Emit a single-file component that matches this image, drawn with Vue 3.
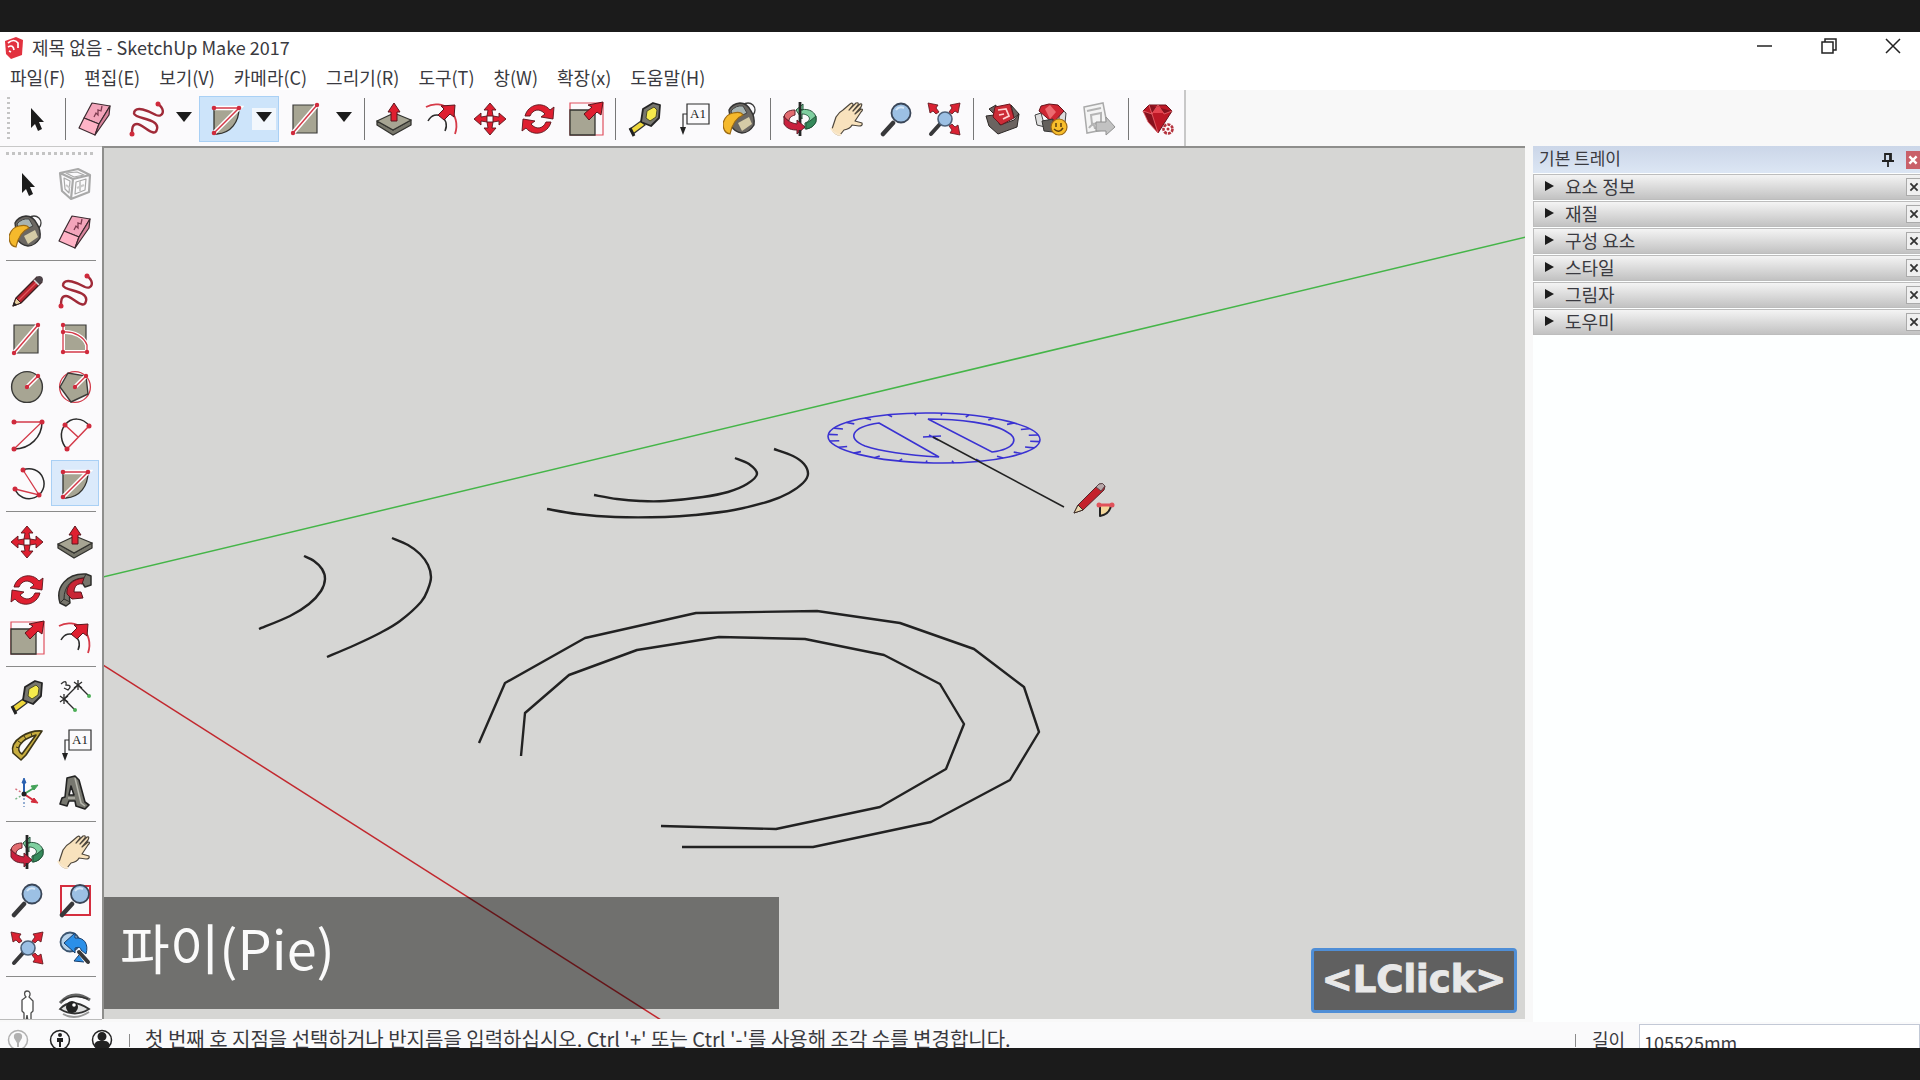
<template>
  <div class="screen">
    <svg class="sprite" aria-hidden="true">
      <symbol id="cursor" viewBox="0 0 36 36">
        <path d="M13 7V27L17 23L20 30L24 28L21 21H26Z" fill="#1c1c1c" />
      </symbol>
      <symbol id="eraser" viewBox="0 0 36 36">
        <g stroke="#3d2a30" stroke-width="1.2" stroke-linejoin="round">
          <path d="M15 2L33 5L22 23L7 17Z" fill="#f3a5bb" />
          <path d="M7 17L22 23L18 34L2 27Z" fill="#ffb3c6" />
          <path d="M22 23L33 5L32 14L18 34Z" fill="#d9849c" />
        </g>
        <path d="M17 16L19 12L21 14L21 9L24 10L25 5" fill="none" stroke="#7d3b50" stroke-width="1.3" />
      </symbol>
      <symbol id="freehand" viewBox="0 0 36 36">
        <path d="M30 3C38 9 35 17 28 14C21 10 7 4 6 12C5 18 32 17 29 28C27 38 15 23 9 23C4 23 4 28 4 33" fill="none" stroke="#a02a38" stroke-width="2.4" />
        <g fill="#cf2a3c"><circle cx="30" cy="3" r="2.5" /><circle cx="4" cy="33" r="2.5" /></g>
      </symbol>
      <symbol id="line" viewBox="0 0 36 36">
        <path d="M5 4H29V32H5Z" fill="#a7a593" stroke="#3a3a38" stroke-width="1.2" />
        <path d="M5 32L29 4" stroke="#fff" stroke-width="4.5" />
        <path d="M5 32L29 4" stroke="#d33a49" stroke-width="1.5" />
        <g fill="#cf2a3c"><circle cx="5" cy="32" r="2.2" /><circle cx="29" cy="4" r="2.2" /></g>
      </symbol>
      <symbol id="rotrect" viewBox="0 0 36 36">
        <path d="M6 4H29V31H6Z" fill="#a7a593" stroke="#3a3a38" stroke-width="1.2" />
        <path d="M6 4V31H30V24C27 16 17 10 6 11" fill="none" stroke="#fff" stroke-width="4" />
        <path d="M6 4V31H30V24C27 16 17 10 6 11" fill="none" stroke="#d33a49" stroke-width="1.3" />
        <g fill="#cf2a3c"><circle cx="6" cy="4" r="2.2" /><circle cx="6" cy="11" r="2.2" /><circle cx="6" cy="31" r="2.2" /><circle cx="30" cy="31" r="2.2" /></g>
      </symbol>
      <symbol id="circle" viewBox="0 0 36 36">
        <circle cx="18" cy="18" r="15.4" fill="#a7a593" stroke="#3a3a38" stroke-width="1.4" />
        <path d="M18 18L29 7" stroke="#fff" stroke-width="4.5" />
        <path d="M18 18L29 7" stroke="#d33a49" stroke-width="1.5" />
        <g fill="#cf2a3c"><circle cx="18" cy="18" r="2.2" /><circle cx="29" cy="7" r="2.2" /></g>
      </symbol>
      <symbol id="polygon" viewBox="0 0 36 36">
        <circle cx="18" cy="18" r="15.4" fill="none" stroke="#d33a49" stroke-width="1.3" />
        <path d="M3 18L11 4L29 7L31 25L14 33Z" fill="#a7a593" stroke="#3a3a38" stroke-width="1.4" />
        <path d="M18 18L29 7" stroke="#fff" stroke-width="4.5" />
        <path d="M18 18L29 7" stroke="#d33a49" stroke-width="1.5" />
        <g fill="#cf2a3c"><circle cx="18" cy="18" r="2.2" /><circle cx="29" cy="7" r="2.2" /></g>
      </symbol>
      <symbol id="arc" viewBox="0 0 36 36">
        <path d="M33 5C33 20 21 32 5 32" fill="none" stroke="#2b2b2b" stroke-width="1.5" />
        <path d="M5 5H33L5 32" fill="none" stroke="#d33a49" stroke-width="1.3" />
        <g fill="#cf2a3c"><circle cx="5" cy="5" r="2.5" /><circle cx="33" cy="5" r="2.5" /><circle cx="5" cy="32" r="2.5" /></g>
      </symbol>
      <symbol id="arc2" viewBox="0 0 36 36">
        <path d="M32 9C26 0 14 0 8 8C2 15 4 26 10 32" fill="none" stroke="#2b2b2b" stroke-width="1.5" />
        <path d="M32 9L10 32M8 8L21 20" fill="none" stroke="#d33a49" stroke-width="1.5" />
        <g fill="#cf2a3c"><circle cx="8" cy="8" r="2.5" /><circle cx="32" cy="9" r="2.5" /><circle cx="10" cy="32" r="2.5" /></g>
      </symbol>
      <symbol id="arc3" viewBox="0 0 36 36">
        <path d="M14 5A15 15 0 1 1 6 24" fill="none" stroke="#2b2b2b" stroke-width="1.5" />
        <path d="M14 5L30 30L6 24" fill="none" stroke="#d33a49" stroke-width="1.3" />
        <g fill="#cf2a3c"><circle cx="14" cy="5" r="2.5" /><circle cx="30" cy="30" r="2.5" /><circle cx="6" cy="24" r="2.5" /></g>
      </symbol>
      <symbol id="pie" viewBox="0 0 36 36">
        <path d="M6 7H31C31 21 23 32 9 33H6Z" fill="#a7a593" stroke="#33332f" stroke-width="1.3" />
        <path d="M6 7H31L6 32" fill="none" stroke="#fff" stroke-width="4.5" />
        <path d="M6 7H31L6 32" fill="none" stroke="#d33a49" stroke-width="1.5" />
        <g fill="#cf2a3c"><circle cx="6" cy="7" r="2.3" /><circle cx="31" cy="7" r="2.3" /><circle cx="6" cy="32" r="2.3" /></g>
      </symbol>
      <symbol id="pencil" viewBox="0 0 36 36">
        <path d="M4 33L7 25L28 4L33 9L12 30Z" fill="#b8232e" stroke="#3a2022" stroke-width="1.3" stroke-linejoin="round" />
        <path d="M10 27L29 8" stroke="#e0565c" stroke-width="1.2" />
        <path d="M4 33L7 25L12 30Z" fill="#e8d0a0" stroke="#3a2022" />
        <path d="M4 33L5 29L8 32Z" fill="#222" />
        <path d="M25 7L28 4Q30 2 33 4Q35 7 33 9L30 12Z" fill="#4d4348" />
        <path d="M25 7L30 12" stroke="#d8d8d8" stroke-width="1.5" />
      </symbol>
      <symbol id="paint" viewBox="0 0 36 36">
        <circle cx="25" cy="9" r="7" fill="none" stroke="#3c3c3c" stroke-width="1.3" />
        <path d="M6 9Q9 3 17 2Q24 2 28 10Q32 16 31 24Q26 32 19 32Q11 31 8 24Z" fill="#6b6762" stroke="#333" stroke-width="1.4" stroke-linejoin="round" />
        <path d="M8 10Q13 4 20 5L24 12Q16 15 12 19Z" fill="#a8b4b2" stroke="#444" />
        <path d="M15 22L26 16L29 23L19 30Z" fill="#d5cba6" />
        <path d="M0 22Q3 13 10 12Q18 10 20 14Q10 18 7 33Q0 32 0 22Z" fill="#f5b92c" stroke="#9d6b14" stroke-width="1.2" />
      </symbol>
      <symbol id="component" viewBox="0 0 36 36">
        <g fill="none" stroke="#a9a9a9" stroke-width="2.2" stroke-linejoin="round">
          <path d="M3 7L21 3L33 9L32 26L14 33L5 25ZM3 7L16 13L33 9M16 13L14 33" />
          <path d="M7 12L13 15L12 27L8 23ZM19 16L29 13L28 24L18 28ZM9 7L20 6L27 9L17 11Z" stroke-width="1.2" />
        </g>
        <path d="M9 19L13 22M20 22L27 19M23 15V25" stroke="#c9c9c9" stroke-width="2" />
      </symbol>
      <symbol id="move" viewBox="0 0 36 36">
        <g fill="#df1f30" stroke="#5b151c" stroke-width=".9">
          <path v-for="a in [0, 90, 180, 270]" :key="a" d="M18 2L24 9H20L21 15H15L16 9H12Z" :transform="`rotate(${a} 18 18)`" />
        </g>
      </symbol>
      <symbol id="pushpull" viewBox="0 0 36 36">
        <g stroke="#33332f" stroke-width="1.3" stroke-linejoin="round">
          <path d="M1 20V24L17 34L35 24V19L17 29Z" fill="#77766a" />
          <path d="M1 20L18 12L35 19L17 29Z" fill="#a7a593" />
        </g>
        <path d="M18 2L24 11H21V20H15V11H12Z" fill="#df1f30" stroke="#5b151c" />
      </symbol>
      <symbol id="rotate" viewBox="0 0 36 36">
        <g fill="#df1f30" stroke="#5b151c" stroke-width=".9" stroke-linejoin="round">
          <path d="M5 15C8 3 23 0 30 9L34 6L33 18L21 16L25 13C20 7 13 8 10 15Z" />
          <path d="M5 15C8 3 23 0 30 9L34 6L33 18L21 16L25 13C20 7 13 8 10 15Z" transform="rotate(180 18 18)" />
        </g>
      </symbol>
      <symbol id="followme" viewBox="0 0 36 36">
        <path d="M3 31C-2 15 10 1 29 2L34 4V13L28 15L24 9C16 10 11 17 13 31L9 34Z" fill="#77756c" stroke="#2e2e2b" stroke-width="1.5" stroke-linejoin="round" />
        <path d="M3 31L7 27L13 30M7 27C7 14 15 6 27 6M27 6L29 2" fill="none" stroke="#2e2e2b" />
        <path d="M27 6C15 7 9 14 10 22L15 27L26 26L24 20L17 20C17 14 21 11 25 12Z" fill="#c82535" stroke="#5b151c" />
      </symbol>
      <symbol id="scale" viewBox="0 0 36 36">
        <path d="M2 2H35V34H2Z" fill="none" stroke="#e0515f" stroke-width="1.2" />
        <path d="M2 9H27V34H2Z" fill="#a7a593" stroke="#33332f" stroke-width="1.3" />
        <path d="M35 1L33 14L29 11L21 19L16 13L24 6L20 4Z" fill="#df1f30" stroke="#5b151c" />
      </symbol>
      <symbol id="offset" viewBox="0 0 36 36">
        <path d="M2 6C18-3 38 12 31 33" fill="none" stroke="#d63a48" stroke-width="1.8" />
        <path d="M4 20C11 7 27 17 21 30" fill="none" stroke="#2b2b2b" stroke-width="1.5" />
        <path d="M31 4L30 16L26 13L20 19L14 14L20 8L17 5Z" fill="#df1f30" stroke="#5b151c" />
      </symbol>
      <symbol id="tape" viewBox="0 0 36 36">
        <path d="M3 28L14 20L18 24L6 33Z" fill="#efd83c" stroke="#333" stroke-width="1.3" />
        <path d="M3 27L7 35" stroke="#222" stroke-width="3" />
        <path d="M16 8L26 2L33 4L32 17L24 25L14 21Z" fill="#77766f" stroke="#242424" stroke-width="1.8" stroke-linejoin="round" />
        <path d="M20 10L27 6L30 9L29 16L23 20L19 17Z" fill="#f6ea4c" stroke="#4e4e28" />
      </symbol>
      <symbol id="dimension" viewBox="0 0 36 36">
        <path d="M7 20L21 6M7 20L17 30M21 6L31 16" stroke="#2b2b2b" stroke-width="1.4" />
        <path d="M3 17L11 23M3 23L11 17M7 15V25M17 3L25 9M17 9L25 3M21 1V11" stroke="#2b2b2b" stroke-width="1.3" />
        <g fill="#4bad55"><circle cx="18" cy="31" r="2" /><circle cx="32" cy="17" r="2" /></g>
        <path d="M4 5Q10 0 9 6Q16 6 11 11L7 9" fill="none" stroke="#333" stroke-width="1.3" />
      </symbol>
      <symbol id="protractor" viewBox="0 0 36 36">
        <path fill-rule="evenodd" d="M33 4C20 3 0 13 4 26L12 33L17 28ZM27 8L13 27C6 23 10 13 27 8Z" fill="#c7ad3f" stroke="#3c3517" stroke-width="1.6" stroke-linejoin="round" />
        <path d="M7 20L10 21M9 14L12 16M15 9L17 12M22 6L23 9" stroke="#3c3517" />
      </symbol>
      <symbol id="textlabel" viewBox="0 0 36 36">
        <path d="M12 3H34V23H12ZM12 13H8V27" fill="none" stroke="#2d2d2d" stroke-width="1.2" />
        <path d="M5 26H11L8 34Z" fill="#222" />
        <text x="23" y="17" text-anchor="middle" font-family="Liberation Serif, serif" font-size="13" fill="#222">A1</text>
      </symbol>
      <symbol id="axes" viewBox="0 0 36 36">
        <path d="M15 19V8" stroke="#285fb0" stroke-width="2" />
        <path d="M15 3L17 8H13Z" fill="#285fb0" stroke="#285fb0" />
        <path d="M15 19L25 13" stroke="#44a259" stroke-width="2" />
        <path d="M29 10L25 15L22 11Z" fill="#44a259" stroke="#44a259" />
        <path d="M15 19L24 25" stroke="#d42b3b" stroke-width="2" />
        <path d="M29 28L22 27L25 23Z" fill="#d42b3b" stroke="#d42b3b" />
        <g stroke-width="1.5" stroke-dasharray="2 2"><path d="M15 19V32" stroke="#7394c4" /><path d="M15 19L5 25" stroke="#79b788" /><path d="M15 19L5 13" stroke="#d7707b" /></g>
        <circle cx="15" cy="19" r="2.5" fill="#222" />
      </symbol>
      <symbol id="text3d" viewBox="0 0 36 36">
        <path fill-rule="evenodd" d="M10 3L18 1L22 5L28 27L32 30L28 34L19 31L18 26H12L10 31L3 29L5 23L8 22ZM14 11L12 20H17Z" fill="#77776f" stroke="#232323" stroke-width="1.6" stroke-linejoin="round" />
        <path d="M18 3L24 28L28 31M11 23H18" stroke="#b8b8af" stroke-width="1.5" fill="none" />
      </symbol>
      <symbol id="orbit" viewBox="0 0 36 36">
        <path d="M18 9C30 6 37 15 33 22C31 26 27 28 23 28V22C31 19 27 13 20 13V18L14 9L21 3V9Z" fill="#7fd0a0" stroke="#24543a" />
        <path d="M28 20L34 15V21Q31 27 24 28V22Z" fill="#35895b" stroke="#24543a" />
        <path d="M13 9C6 9 2 12 2 17L7 20C7 17 9 15 13 14Z" fill="#e26c70" stroke="#60202a" />
        <path d="M18 1V24" stroke="#262626" stroke-width="2.8" />
        <path d="M2 15V23C5 28 10 29 15 29V33L23 26L15 19V23C9 22 5 20 2 15Z" fill="#c9203d" stroke="#60202a" />
        <path d="M18 29V35" stroke="#262626" stroke-width="2.8" />
      </symbol>
      <symbol id="hand" viewBox="0 0 36 36">
        <path d="M2 28L6 16Q9 11 13 9L20 3Q23 1 23 4L19 9L26 2Q29 1 28 4L23 10L30 3Q33 2 31 6L25 13L31 8Q34 8 31 11L25 20L32 22Q33 25 29 25L22 24Q20 28 14 29L10 34Q5 34 2 28Z" fill="#f8e2bd" stroke="#4d463c" stroke-width="1.2" stroke-linejoin="round" />
        <path d="M1 27Q5 34 11 34" fill="none" stroke="#fae8cb" stroke-width="2" />
      </symbol>
      <symbol id="zoom" viewBox="0 0 36 36">
        <path d="M5 33L15 22" stroke="#38383a" stroke-width="4.5" stroke-linecap="round" />
        <circle cx="23" cy="12" r="9.5" fill="#9cc0e4" stroke="#3a4658" stroke-width="1.8" />
        <path d="M18 9Q21 5 26 7" fill="none" stroke="#d5e6f6" stroke-width="2" />
      </symbol>
      <symbol id="zoomwin" viewBox="0 0 36 36">
        <path d="M4 4H33V33H4Z" fill="none" stroke="#d52e3f" stroke-width="2" />
        <path d="M5 33L15 22" stroke="#38383a" stroke-width="4.5" stroke-linecap="round" />
        <circle cx="23" cy="12" r="9" fill="#9cc0e4" stroke="#3a4658" stroke-width="1.8" />
        <path d="M18 9Q21 5 26 7" fill="none" stroke="#d5e6f6" stroke-width="2" />
      </symbol>
      <symbol id="zoomext" viewBox="0 0 36 36">
        <path d="M5 33L14 23" stroke="#38383a" stroke-width="4" stroke-linecap="round" />
        <circle cx="19" cy="18" r="7" fill="#9cc0e4" stroke="#4c6078" stroke-width="1.6" />
        <path d="M2 2L12 4L10 7L13 11L10 13L7 10L4 12ZM34 2L24 4L26 7L23 11L26 13L29 10L32 12ZM34 34L24 32L26 29L23 25L26 23L29 26L32 24Z" fill="#d92233" stroke="#5b151c" stroke-width=".8" />
      </symbol>
      <symbol id="zoomprev" viewBox="0 0 36 36">
        <circle cx="13" cy="12" r="9.5" fill="#b7d2ea" stroke="#3c5570" stroke-width="1.8" />
        <path d="M7 13L18 3V8C27 7 32 14 29 24L24 20C24 17 21 17 18 18V23ZM22 25L17 31L27 32" fill="#2b8fe8" stroke="#173d6b" />
        <path d="M22 22L31 32" stroke="#38383a" stroke-width="4" stroke-linecap="round" />
      </symbol>
      <symbol id="walk" viewBox="0 0 36 36">
        <path d="M18 2C15 2 15 6 17 8L13 11V22L15 24V32H17L18 26L19 32H22V24L24 22V12L20 8C22 5 21 2 18 2Z" fill="#fff" stroke="#4b4b4b" stroke-width="1.3" />
        <path d="M13 32H17M19 32H23" stroke="#a33" stroke-width="1.5" />
      </symbol>
      <symbol id="eye" viewBox="0 0 36 36">
        <path d="M3 14Q16 0 33 11" fill="none" stroke="#666" stroke-width="3" />
        <path d="M5 12Q17 4 31 10" fill="none" stroke="#333" stroke-width="1.5" />
        <path d="M3 20Q14 8 32 20Q18 29 3 20Z" fill="#e0e0e0" stroke="#333" stroke-width="1.8" />
        <circle cx="15" cy="18" r="6" fill="#222" /><circle cx="17" cy="16" r="1.8" fill="#fff" />
        <path d="M6 25Q18 32 32 23" fill="none" stroke="#999" stroke-width="2" />
      </symbol>
      <symbol id="warehouse" viewBox="0 0 36 36">
        <path d="M1 15L9 14L15 24L29 19L34 13L32 26L13 33L4 25ZM4 8L11 4L10 14ZM26 4L34 13L29 17Z" fill="#6b6360" stroke="#2c2826" stroke-linejoin="round" />
        <path d="M10 6L25 3L29 17L16 24L8 16Z" fill="#cc2b36" stroke="#6d151d" />
        <path d="M13 9L21 8L24 15L18 18M14 14L19 13" fill="none" stroke="#ffd2d2" stroke-width="1.7" />
      </symbol>
      <symbol id="extension" viewBox="0 0 36 36">
        <path d="M2 14L8 12L12 26L4 24ZM26 6L33 12L32 22L26 20Z" fill="#dedede" stroke="#444" />
        <path d="M8 5L16 3L25 4L31 10L20 22L6 10Z" fill="#cf2632" stroke="#64131b" />
        <path d="M12 8L17 4L23 11L17 18Z" fill="#ec6a70" />
        <path d="M9 20L20 18V31L11 30Z" fill="#63605d" stroke="#333" />
        <circle cx="26" cy="26" r="8" fill="#f8be2b" stroke="#9b6815" stroke-width="1.2" />
        <path d="M23 22V26M28 22V26M21 28Q26 33 30 27" fill="none" stroke="#5d400e" stroke-width="1.5" />
      </symbol>
      <symbol id="layout" viewBox="0 0 36 36">
        <path d="M3 6L22 2L27 28L6 32Z" fill="#f4f4f4" stroke="#aaa" stroke-width="1.5" />
        <path d="M6 10L20 7M10 14L20 12V22L11 23ZM8 27Q13 20 14 28" fill="none" stroke="#b4b4b4" stroke-width="2" />
        <path d="M15 21H25V16L34 26L25 34V30H15Z" fill="#c2c2c2" stroke="#909090" />
      </symbol>
      <symbol id="ruby" viewBox="0 0 36 36">
        <path d="M3 10L9 4H26L32 10L18 32Z" fill="#bd1826" stroke="#68101a" stroke-linejoin="round" />
        <path d="M3 10L12 13L18 32L8 21ZM9 4L12 13L18 4L24 13L32 10" fill="#86121e" stroke="#ec6970" stroke-width=".8" />
        <path d="M12 12L18 5L24 12Z" fill="#e5444f" />
        <circle cx="28" cy="28" r="4.5" fill="#fff" stroke="#b5343f" stroke-width="2.6" stroke-dasharray="3 1" />
        <circle cx="28" cy="28" r="1.5" fill="#b5343f" />
      </symbol>
    </svg>

    <div class="letterbox"></div>

    <header class="titlebar">
      <svg class="logo" viewBox="0 0 20 24">
        <path d="M1 5L12 1L19 4L18 19L7 23L2 18Z" fill="#e2323f" />
        <path d="M4 7Q10 2 14 7V12M4 11Q9 8 10 14M5 15L7 16" fill="none" stroke="#fff" stroke-width="1.7" />
      </svg>
      <h1>제목 없음 - SketchUp Make 2017</h1>
      <div class="window-buttons">
        <button aria-label="최소화"><svg viewBox="0 0 18 18"><path d="M1 9H16" /></svg></button>
        <button aria-label="이전 크기로"><svg viewBox="0 0 18 18"><path d="M2 5H13V16H2ZM5 5V2H16V13H13" /></svg></button>
        <button aria-label="닫기"><svg viewBox="0 0 18 18"><path d="M2 2L16 16M16 2L2 16" /></svg></button>
      </div>
    </header>

    <nav class="menubar">
      <button v-for="item in menus" :key="item">{{ item }}</button>
    </nav>

    <div class="toolbar-row">
      <div class="toolbar">
        <template v-for="(group, g) in toolbar" :key="g">
          <span v-if="g" class="divider"></span>
          <template v-for="tool in group" :key="tool.icon">
            <div v-if="tool.menu" class="split" :class="{ active: tool.active }">
              <button class="split-main" :aria-label="tool.icon"><svg class="icon"><use :href="'#' + tool.icon" /></svg></button>
              <button class="split-arrow" :aria-label="tool.icon + ' menu'"><svg viewBox="0 0 16 10"><path d="M0 0H16L8 10Z" /></svg></button>
            </div>
            <button v-else class="tool" :aria-label="tool.icon"><svg class="icon"><use :href="'#' + tool.icon" /></svg></button>
          </template>
        </template>
      </div>
    </div>

    <main class="workspace">
      <aside class="toolset">
        <div class="grip"></div>
        <div v-for="(group, g) in toolset" :key="g" class="tool-group">
          <button v-for="name in group" :key="name" class="tool" :class="{ active: name === 'pie' }" :aria-label="name">
            <svg class="icon"><use :href="'#' + name" /></svg>
          </button>
        </div>
      </aside>

      <section class="viewport">
        <svg class="model" viewBox="104 148 1421 871" preserveAspectRatio="xMinYMin slice">
          <path d="M103 577L1526 237" stroke="#45b548" stroke-width="1.5" />
          <path d="M103 665L661 1020" stroke="#c2282e" stroke-width="1.5" />
          <g fill="none" stroke="#222" stroke-width="2.4" stroke-linejoin="round">
            <path v-for="(arc, i) in arcs" :key="i" :d="smooth(arc)" />
            <polyline v-for="points in coarseArcs" :key="points" :points="points" />
          </g>
          <g fill="none" stroke="#3a32d2" stroke-width="1.6">
            <ellipse cx="934" cy="438" rx="106" ry="25" transform="rotate(1 934 438)" />
            <path v-for="(d, i) in ticks" :key="i" :d="d" transform="rotate(1 934 438)" />
            <path d="M879 423L939 457C905 455 880 451 865 446C847 439 850 427 879 423Z" />
            <path d="M928 419L992 452C1016 449 1019 438 1007 432C994 423 958 419 928 419Z" />
            <path d="M923 437L941 436M929 435L938 440" />
          </g>
          <path d="M933 437L1064 507" stroke="#222" stroke-width="1.5" />
          <g stroke-linejoin="round">
            <path d="M1074 513L1078 505L1098 485Q1102 482 1105 486L1104 490L1083 510Z" fill="#c4222c" stroke="#54272a" />
            <path d="M1074 513L1078 505L1083 510Z" fill="#ead7ae" stroke="#3a3028" />
            <path d="M1096 487L1099 484Q1103 482 1105 486L1101 491Z" fill="#b9a8aa" stroke="#5a4548" />
            <path d="M1100 505H1111Q1110 514 1100 516Z" fill="#f3d79b" stroke="#222" stroke-width="2" />
            <path d="M1099 505H1112" stroke="#e0525a" stroke-width="3" />
            <g fill="#e0525a"><circle cx="1099" cy="505" r="2.5" /><circle cx="1112" cy="505" r="2.5" /></g>
          </g>
        </svg>
        <div class="caption">파이(Pie)</div>
        <div class="keypress">&lt;LClick&gt;</div>
      </section>

      <aside class="tray">
        <div class="tray-header">
          <h2>기본 트레이</h2>
          <button class="pin" aria-label="고정"><svg viewBox="0 0 12 14"><path d="M3 1H9V8H3ZM8 1V8M0 8H12M6 8V14" fill="none" stroke="#222" stroke-width="1.8" /></svg></button>
          <button class="tray-close" aria-label="닫기"><svg viewBox="0 0 10 10"><path d="M2 2L8 8M8 2L2 8" /></svg></button>
        </div>
        <div v-for="panel in panels" :key="panel" class="panel">
          <button class="panel-title"><svg viewBox="0 0 9 10"><path d="M0 0L9 5L0 10Z" /></svg>{{ panel }}</button>
          <button class="panel-close" :aria-label="panel + ' 닫기'"><svg viewBox="0 0 10 10"><path d="M2 2L8 8M8 2L2 8" /></svg></button>
        </div>
      </aside>
    </main>

    <footer class="statusbar">
      <div class="status-icons">
        <svg viewBox="0 0 22 22" class="dim"><circle cx="11" cy="11" r="9.5" /><path d="M11 4Q16 4 15 9L12 14V18H10V14L7 9Q6 4 11 4Z" /></svg>
        <svg viewBox="0 0 22 22"><circle cx="11" cy="11" r="9.5" /><path d="M11 4A2 2 0 0 1 11 8A2 2 0 0 1 11 4ZM8 9H14V13H12V18H10V13H8Z" /></svg>
        <svg viewBox="0 0 22 22"><circle cx="11" cy="11" r="9.5" /><path d="M11 3A4 4 0 0 1 11 12A4 4 0 0 1 11 3ZM3 17Q4 12 8 12H14Q18 12 19 17Q11 24 3 17Z" /></svg>
      </div>
      <span class="status-divider"></span>
      <p>첫 번째 호 지점을 선택하거나 반지름을 입력하십시오. Ctrl '+' 또는 Ctrl '-'를 사용해 조각 수를 변경합니다.</p>
      <span class="status-divider"></span>
      <label for="length">길이</label>
      <input id="length" v-model="length" type="text" />
    </footer>

    <div class="letterbox"></div>
  </div>
</template>

<script setup>
import { ref } from 'vue'

const length = ref('105525mm')

const menus = ['파일(F)', '편집(E)', '보기(V)', '카메라(C)', '그리기(R)', '도구(T)', '창(W)', '확장(x)', '도움말(H)']

const panels = ['요소 정보', '재질', '구성 요소', '스타일', '그림자', '도우미']

const toolbar = [
  [{ icon: 'cursor' }],
  [
    { icon: 'eraser' },
    { icon: 'freehand', menu: true },
    { icon: 'pie', menu: true, active: true },
    { icon: 'line', menu: true }
  ],
  [{ icon: 'pushpull' }, { icon: 'offset' }, { icon: 'move' }, { icon: 'rotate' }, { icon: 'scale' }],
  [{ icon: 'tape' }, { icon: 'textlabel' }, { icon: 'paint' }],
  [{ icon: 'orbit' }, { icon: 'hand' }, { icon: 'zoom' }, { icon: 'zoomext' }],
  [{ icon: 'warehouse' }, { icon: 'extension' }, { icon: 'layout' }],
  [{ icon: 'ruby' }]
]

const toolset = [
  ['cursor', 'component', 'paint', 'eraser'],
  ['pencil', 'freehand', 'line', 'rotrect', 'circle', 'polygon', 'arc', 'arc2', 'arc3', 'pie'],
  ['move', 'pushpull', 'rotate', 'followme', 'scale', 'offset'],
  ['tape', 'dimension', 'protractor', 'textlabel', 'axes', 'text3d'],
  ['orbit', 'hand', 'zoom', 'zoomwin', 'zoomext', 'zoomprev'],
  ['walk', 'eye']
]

// arcs already drawn in the model
const arcs = [
  [[304, 556], [314, 561], [322, 569], [325, 579], [321, 591], [309, 604], [290, 616], [259, 629]],
  [[392, 538], [408, 545], [420, 554], [428, 565], [431, 577], [428, 589], [421, 602], [400, 621], [380, 633], [355, 645], [327, 657]],
  [[735, 458], [749, 464], [757, 474], [747, 484], [728, 492], [703, 497], [665, 501], [640, 501], [617, 499], [594, 495]],
  [[774, 449], [793, 456], [804, 464], [808, 474], [803, 483], [789, 493], [770, 501], [734, 510], [695, 515], [665, 517], [615, 517], [577, 514], [547, 509]]
]

// arcs with a low segment count keep their corners
const coarseArcs = [
  '479,743 505,683 585,638 696,613 817,611 900,623 974,649 1024,687 1039,732 1010,780 931,822 813,847 682,847',
  '521,756 525,713 569,675 637,650 719,637 805,639 884,655 940,684 964,724 946,769 880,807 776,829 661,826'
]

function smooth(pts) {
  let d = `M${pts[0].join(' ')}`
  for (let i = 0; i < pts.length - 1; i++) {
    const p0 = pts[i - 1] || pts[i]
    const p1 = pts[i]
    const p2 = pts[i + 1]
    const p3 = pts[i + 2] || p2
    d += `C${p1[0] + (p2[0] - p0[0]) / 6} ${p1[1] + (p2[1] - p0[1]) / 6} `
    d += `${p2[0] - (p3[0] - p1[0]) / 6} ${p2[1] - (p3[1] - p1[1]) / 6} ${p2[0]} ${p2[1]}`
  }
  return d
}

// protractor marks every 15 degrees
const ticks = Array.from({ length: 24 }, (_, i) => {
  const a = ((i * 15 + 4) * Math.PI) / 180
  const at = (k) => `${934 + 106 * k * Math.cos(a)} ${438 + 25 * k * Math.sin(a)}`
  return `M${at(1)}L${at(0.91)}`
})
</script>

<style>
body {
  margin: 0;
  background: #1b1b1b;
}
</style>

<style scoped>
.screen {
  display: flex;
  flex-direction: column;
  height: 100vh;
  overflow: hidden;
  background: #f8f8f8;
  color: #3a3a40;
  font-family: "Noto Sans CJK KR", sans-serif;
}

.screen * {
  box-sizing: border-box;
}

.sprite {
  display: none;
}

button {
  display: flex;
  align-items: center;
  justify-content: center;
  padding: 0;
  border: 0;
  background: none;
  color: inherit;
  font: inherit;
}

.letterbox {
  flex: 0 0 32px;
  background: #1b1b1b;
}

.titlebar {
  display: flex;
  flex: 0 0 32px;
  align-items: center;
  background: #fff;
}

.logo {
  width: 20px;
  height: 24px;
  margin: 0 8px 0 4px;
}

h1 {
  flex: 1;
  margin: 0;
  padding-bottom: 2px;
  font-size: 18px;
  font-weight: 400;
  line-height: 24px;
}

.window-buttons {
  display: flex;
  gap: 10px;
  padding-bottom: 4px;
}

.window-buttons button {
  width: 54px;
  height: 28px;
}

.window-buttons svg {
  width: 18px;
  height: 18px;
  fill: none;
  stroke: #222;
  stroke-width: 1.5;
}

.menubar {
  display: flex;
  flex: 0 0 26px;
  gap: 19px;
  padding-left: 10px;
  background: #fff;
  font-size: 18px;
  line-height: 24px;
}

.toolbar-row {
  display: flex;
  flex: 0 0 56px;
}

.toolbar {
  display: flex;
  align-items: center;
  padding: 2px 2px 0 7px;
  border-right: 2px solid #c8c8c8;
  background: #fbfafc;
}

.toolbar::before {
  width: 3px;
  height: 44px;
  margin-right: 2px;
  background: repeating-linear-gradient(#c4c4c4 0 2px, transparent 2px 5px);
  content: "";
}

.divider {
  width: 1px;
  height: 42px;
  margin: 0 5px;
  background: #777;
}

.tool {
  width: 48px;
  height: 46px;
}

.icon {
  display: block;
  width: 36px;
  height: 36px;
}

.split {
  display: flex;
  align-items: center;
  width: 80px;
  height: 46px;
  border: 1px solid transparent;
}

.split-main {
  width: 52px;
}

.split-arrow {
  width: 24px;
  height: 22px;
  padding-bottom: 4px;
}

.split-arrow svg {
  width: 16px;
  height: 10px;
  fill: #1c1c1c;
}

.active {
  border: 1px solid #a9d0f5;
  background: #cde4fa;
}

.active .split-arrow {
  background: #f2f7fc;
}

.workspace {
  display: flex;
  flex: 1;
  min-height: 0;
}

.toolset {
  flex: 0 0 102px;
  margin-bottom: 2px;
  padding: 0 6px;
  overflow: hidden;
  border-top: 1px solid #c8c8c8;
  border-bottom: 1px solid #bbb;
  background: #fbfafc;
}

.grip {
  height: 3px;
  margin: 5px 0;
  background: repeating-linear-gradient(90deg, #c4c4c4 0 3px, transparent 3px 6px);
}

.tool-group {
  display: grid;
  grid-template-columns: 48px 48px;
  grid-auto-rows: 48px;
  align-items: center;
  justify-content: center;
}

.tool-group + .tool-group {
  margin-top: 4px;
  padding-top: 6px;
  border-top: 1px solid #8a8a8a;
}

.toolset .active {
  background: #dbeafb;
}

.viewport {
  position: relative;
  flex: 1;
  margin-bottom: 3px;
  overflow: hidden;
  border-top: 2px solid #8e8e8c;
  border-left: 2px solid #8e8e8c;
  background: #d6d6d4;
}

.model {
  display: block;
  width: 100%;
  height: 100%;
}

.caption {
  position: absolute;
  bottom: 10px;
  left: 0;
  width: 675px;
  height: 112px;
  padding-left: 16px;
  background: rgba(0, 0, 0, 0.48);
  color: #fafafa;
  font-size: 54px;
  line-height: 100px;
}

.keypress {
  position: absolute;
  right: 8px;
  bottom: 6px;
  width: 206px;
  height: 65px;
  border: 3px solid #4f8ed6;
  border-radius: 4px;
  background: #606060;
  color: #e8e8e8;
  font-family: "DejaVu Sans", sans-serif;
  font-size: 37px;
  font-weight: 700;
  line-height: 57px;
  text-align: center;
  -webkit-text-stroke: 1px #e8e8e8;
}

.tray {
  flex: 0 0 387px;
  margin-left: 8px;
  background: #fdffff;
}

.tray-header {
  display: flex;
  align-items: center;
  height: 27px;
  margin-bottom: 1px;
  padding-left: 6px;
  background: linear-gradient(#cbd6e8, #dce6f4);
}

h2 {
  flex: 1;
  margin: 0;
  padding-bottom: 3px;
  font-size: 17px;
  font-weight: 400;
  line-height: 24px;
}

.pin {
  margin-right: 12px;
}

.pin svg {
  width: 12px;
  height: 14px;
}

.tray-close {
  width: 14px;
  height: 18px;
  background: #c9606a;
}

.tray-close svg,
.panel-close svg {
  width: 12px;
  height: 12px;
  fill: none;
  stroke: #fff;
  stroke-width: 2;
}

.panel {
  display: flex;
  align-items: center;
  height: 26px;
  margin-bottom: 1px;
  border: 1px solid #bdbdbd;
  border-right: 0;
  background: linear-gradient(#f4f4f4, #c2c2c2);
}

.panel-title {
  flex: 1;
  justify-content: flex-start;
  gap: 11px;
  padding: 0 0 3px 11px;
  font-size: 18px;
  line-height: 22px;
}

.panel-title svg {
  width: 9px;
  height: 10px;
  fill: #1c1c1c;
}

.panel-close {
  width: 14px;
  height: 18px;
  border: 1px solid #aaa;
  border-right: 0;
  background: #f0f0f0;
}

.panel-close svg {
  stroke: #333;
  stroke-width: 1.5;
}

.statusbar {
  display: flex;
  flex: 0 0 26px;
  overflow: hidden;
  background: #fafafb;
  font-size: 18px;
  line-height: 34px;
}

.status-icons {
  display: flex;
  gap: 20px;
  padding: 7px 16px 0 7px;
}

.status-icons svg {
  width: 22px;
  height: 22px;
  fill: #222;
}

.status-icons circle {
  fill: none;
  stroke: #222;
  stroke-width: 1.5;
}

.status-icons .dim {
  fill: #b0b0b0;
}

.status-icons .dim circle {
  stroke: #b0b0b0;
}

.status-divider {
  width: 1px;
  height: 13px;
  margin-top: 12px;
  background: #8c8c8c;
}

.statusbar p {
  flex: 1;
  margin: 0 0 0 15px;
  font-size: 20px;
  white-space: nowrap;
}

.statusbar label {
  margin: 0 14px 0 16px;
}

.statusbar input {
  width: 281px;
  height: 36px;
  margin: 2px 0 0;
  padding: 2px 4px;
  border: 1px solid #c3c9d6;
  background: #fff;
  color: #3a3a40;
  font-family: "Noto Sans CJK KR", sans-serif;
  font-size: 18px;
}
</style>
